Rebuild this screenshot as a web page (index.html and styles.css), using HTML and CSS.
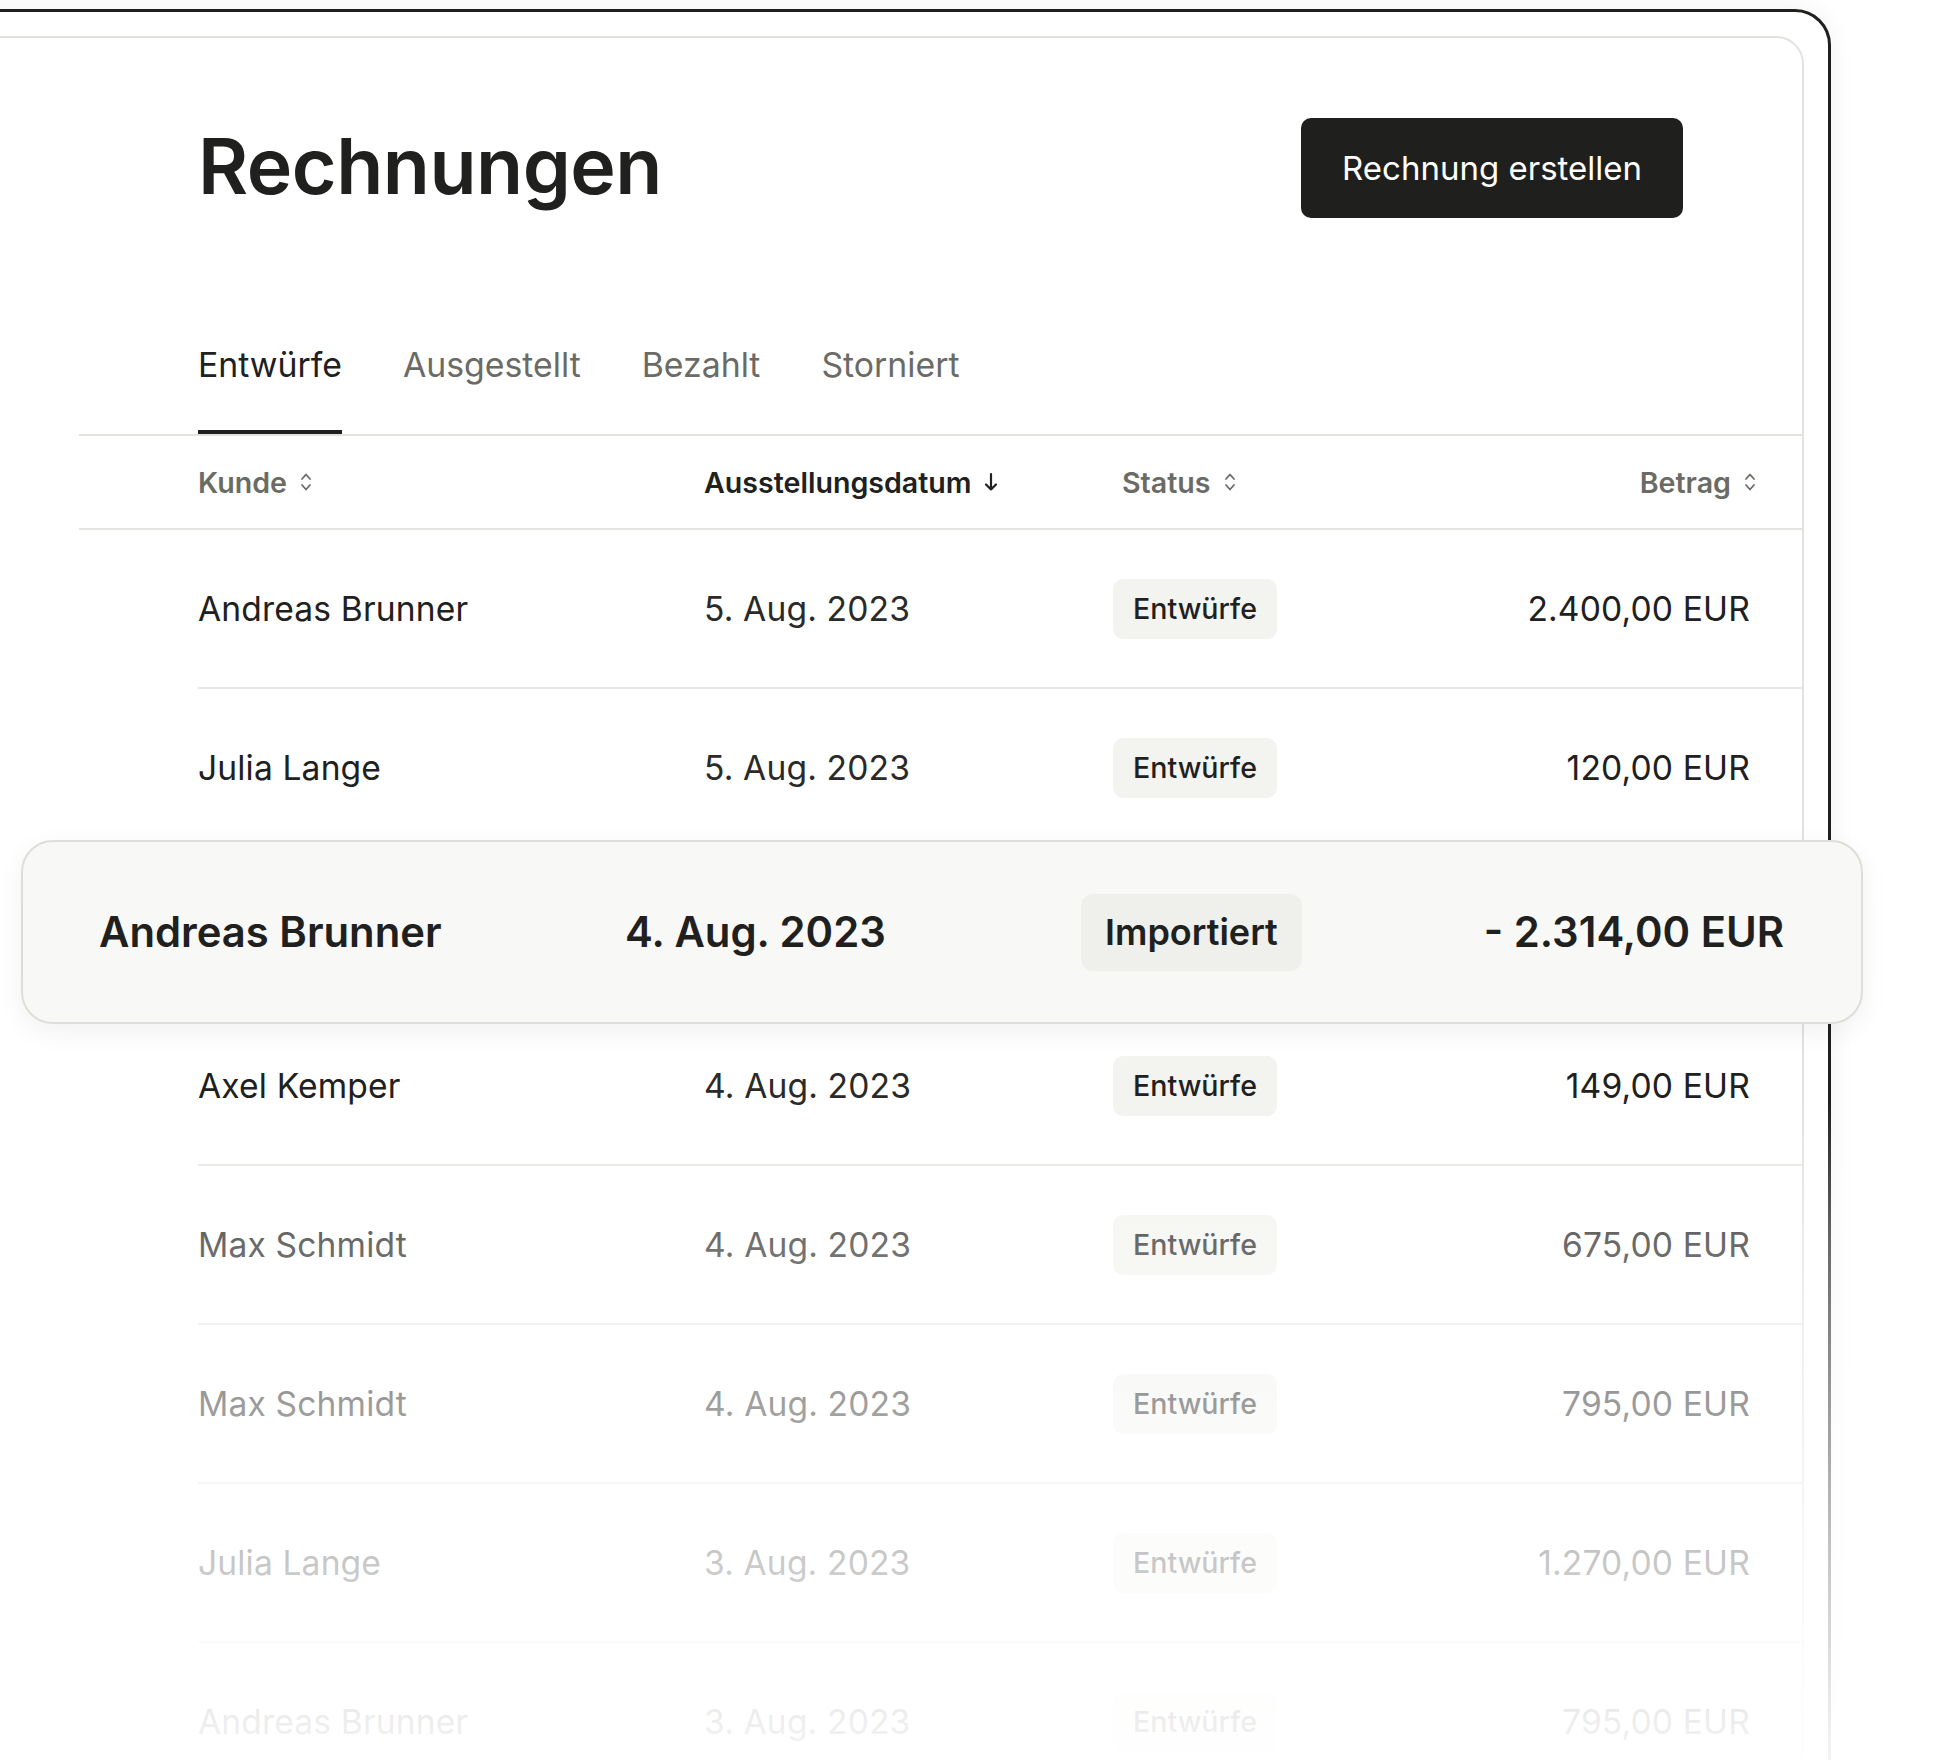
FILE: index.html
```html
<!DOCTYPE html>
<html lang="de">
<head>
  <meta charset="UTF-8">
  <title>Rechnungen</title>
  <link rel="stylesheet" href="styles.css">
</head>
<body>
  <div class="device">
    <div class="panel">
      <div class="head">
        <h1 class="title">Rechnungen</h1>
        <button class="create">Rechnung erstellen</button>
      </div>

      <ul class="tabs">
        <li class="active">Entwürfe</li>
        <li>Ausgestellt</li>
        <li>Bezahlt</li>
        <li>Storniert</li>
      </ul>

      <div class="thead">
        <div class="th">Kunde
          <svg class="sort" viewBox="0 0 12 22"><path d="M2 8 6 3.5 10 8M2 14 6 18.5 10 14"/></svg>
        </div>
        <div class="th on">Ausstellungsdatum
          <svg class="arrow" viewBox="0 0 16 22"><path d="M8 3v15.5M3 13.5l5 5 5-5"/></svg>
        </div>
        <div class="th status">Status
          <svg class="sort" viewBox="0 0 12 22"><path d="M2 8 6 3.5 10 8M2 14 6 18.5 10 14"/></svg>
        </div>
        <div class="th right">Betrag
          <svg class="sort" viewBox="0 0 12 22"><path d="M2 8 6 3.5 10 8M2 14 6 18.5 10 14"/></svg>
        </div>
      </div>

      <div class="row">
        <div>Andreas Brunner</div>
        <div class="date">5. Aug. 2023</div>
        <div><span class="badge">Entwürfe</span></div>
        <div class="amount">2.400,00 EUR</div>
      </div>
      <div class="row">
        <div>Julia Lange</div>
        <div class="date">5. Aug. 2023</div>
        <div><span class="badge">Entwürfe</span></div>
        <div class="amount">120,00 EUR</div>
      </div>
      <div class="row lifted">
        <div class="lift">
          <div>Andreas Brunner</div>
          <div class="date">4. Aug. 2023</div>
          <div><span class="badge">Importiert</span></div>
          <div class="amount">- 2.314,00 EUR</div>
        </div>
      </div>
      <div class="row">
        <div>Axel Kemper</div>
        <div class="date">4. Aug. 2023</div>
        <div><span class="badge">Entwürfe</span></div>
        <div class="amount">149,00 EUR</div>
      </div>
      <div class="row">
        <div>Max Schmidt</div>
        <div class="date">4. Aug. 2023</div>
        <div><span class="badge">Entwürfe</span></div>
        <div class="amount">675,00 EUR</div>
      </div>
      <div class="row">
        <div>Max Schmidt</div>
        <div class="date">4. Aug. 2023</div>
        <div><span class="badge">Entwürfe</span></div>
        <div class="amount">795,00 EUR</div>
      </div>
      <div class="row">
        <div>Julia Lange</div>
        <div class="date">3. Aug. 2023</div>
        <div><span class="badge">Entwürfe</span></div>
        <div class="amount">1.270,00 EUR</div>
      </div>
      <div class="row">
        <div>Andreas Brunner</div>
        <div class="date">3. Aug. 2023</div>
        <div><span class="badge">Entwürfe</span></div>
        <div class="amount">795,00 EUR</div>
      </div>
    </div>
  </div>

  <div class="fade"></div>
</body>
</html>
```

FILE: styles.css
```css
body, ul, li, h1 {
  list-style: none;
  margin: 0;
  padding: 0;
}

body {
  position: relative;
  height: 1760px;
  overflow: hidden;
  background: #fff;
  color: #20201e;
  font-family: Inter, "Noto Sans", sans-serif;
}

* {
  box-sizing: border-box;
}

/* outer frame, runs off the left and bottom edge */
.device {
  width: 1891px;
  height: 1900px;
  margin: 9px 0 0 -60px;
  padding: 24px 24px 0 0;
  border: 3px solid #1f1f1d;
  border-radius: 36px;
  box-shadow: 0 0 26px rgba(0, 0, 0, 0.06);
}
.panel {
  height: 1860px;
  padding-left: 134px;
  border: 2px solid #e2e2de;
  border-radius: 28px;
}

.head {
  display: flex;
  justify-content: space-between;
  align-items: center;
  height: 100px;
  margin: 80px 119px 0 119px;
}
.title {
  font-size: 77px;
  font-weight: 600;
  letter-spacing: -0.5px;
  line-height: 1;
  margin-top: -4px;
}
.create {
  height: 100px;
  padding: 0 41px;
  border: 0;
  border-radius: 10px;
  background: #1f1f1d;
  color: #fff;
  font-family: inherit;
  font-size: 33px;
  font-weight: 400;
  cursor: pointer;
}

.tabs {
  display: flex;
  gap: 61px;
  margin-top: 127px;
  padding-left: 119px;
  border-bottom: 2px solid #e3e3df;
}
.tabs li {
  font-size: 33.8px;
  line-height: 40px;
  padding-bottom: 45px;
  border-bottom: 4px solid transparent;
  color: #6b6b66;
}
.tabs li.active {
  color: #20201e;
  border-bottom-color: #1f1f1d;
}

.thead, .row {
  display: grid;
  grid-template-columns: 506px 409px 1fr auto;
  align-items: center;
}
.thead {
  height: 94px;
  padding: 0 46px 0 119px;
  border-bottom: 2px solid #e3e3df;
}
.th {
  display: flex;
  align-items: center;
  font-size: 28.6px;
  font-weight: 600;
  color: #6b6b66;
}
.th.on {
  color: #20201e;
}
.th.status {
  padding-left: 9px;
}
.th.right {
  justify-content: flex-end;
}
.sort {
  width: 12px;
  height: 22px;
  margin-left: 13px;
  fill: none;
  stroke: #6b6b66;
  stroke-width: 1.8;
  stroke-linecap: round;
  stroke-linejoin: round;
}
.arrow {
  width: 16px;
  height: 22px;
  margin-left: 11px;
  fill: none;
  stroke: #20201e;
  stroke-width: 2.2;
  stroke-linecap: round;
  stroke-linejoin: round;
}

.row {
  height: 159px;
  margin-left: 119px;
  padding-right: 52px;
  border-bottom: 2px solid #e6e6e2;
  font-size: 33.6px;
  letter-spacing: 0.15px;
}
.date {
  color: #2a2a28;
}
.amount {
  text-align: right;
}
.badge {
  display: inline-flex;
  align-items: center;
  height: 60px;
  padding: 0 20px;
  border-radius: 10px;
  background: #f3f3ef;
  font-size: 28.6px;
  font-weight: 500;
  letter-spacing: 0;
}

/* the highlighted row floats above the table */
.row.lifted {
  position: relative;
  z-index: 1;
}
.lift {
  position: absolute;
  top: -8px;
  bottom: -19px;
  left: -177px;
  right: -61px;
  display: grid;
  grid-template-columns: 526px 456px 1fr auto;
  align-items: center;
  padding: 0 77px 0 76px;
  border: 2px solid #deded9;
  border-radius: 32px;
  background: #f8f8f6;
  box-shadow: 0 8px 28px rgba(0, 0, 0, 0.06);
  font-size: 41.8px;
  font-weight: 600;
  letter-spacing: 0;
}
.lift .date {
  color: #20201e;
}
.lift .badge {
  height: 77px;
  padding: 0 24px;
  border-radius: 12px;
  background: #efefeb;
  font-size: 36px;
  font-weight: 600;
}

.fade {
  position: absolute;
  left: 0;
  right: 0;
  top: 1000px;
  height: 760px;
  pointer-events: none;
  z-index: 2;
  background: linear-gradient(to bottom,
    rgba(255, 255, 255, 0) 0%,
    rgba(255, 255, 255, 0) 13%,
    rgba(255, 255, 255, 0.33) 32%,
    rgba(255, 255, 255, 0.55) 53%,
    rgba(255, 255, 255, 0.75) 74%,
    rgba(255, 255, 255, 0.92) 95%,
    rgba(255, 255, 255, 0.95) 100%);
}
```
